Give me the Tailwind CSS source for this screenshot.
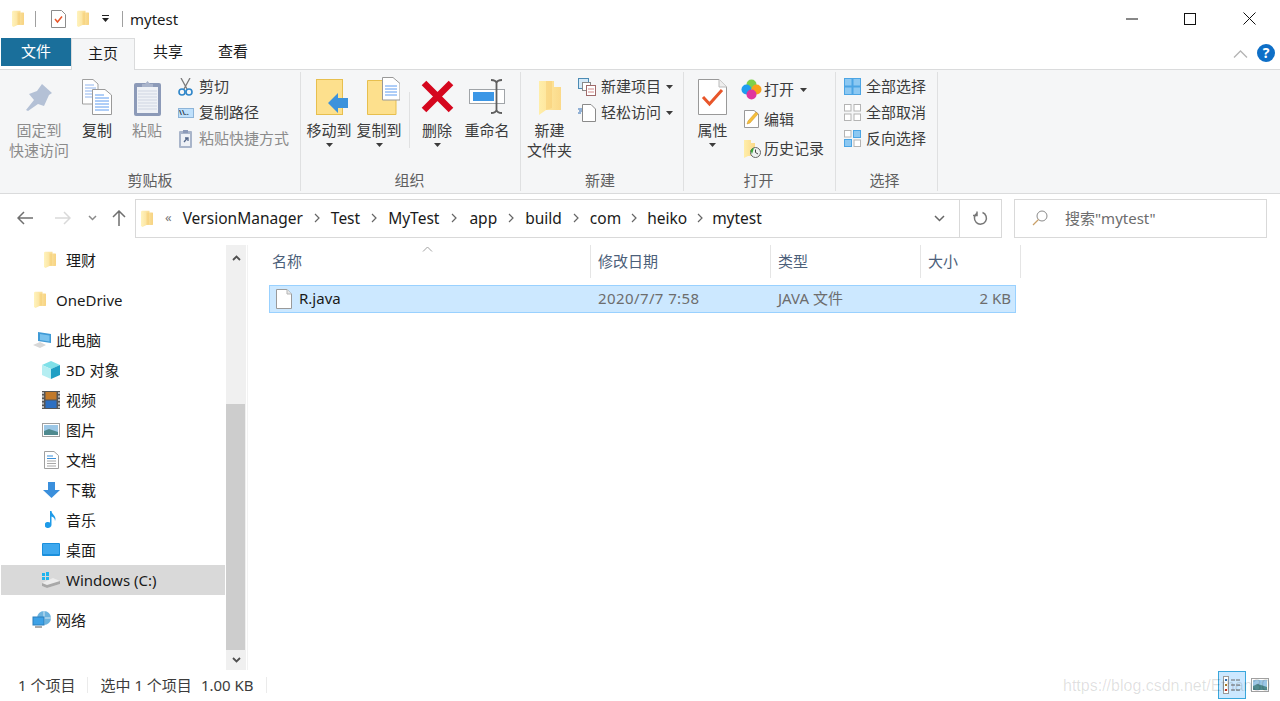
<!DOCTYPE html>
<html lang="zh">
<head>
<meta charset="utf-8">
<title>mytest</title>
<script src="https://cdn.jsdelivr.net/npm/@tailwindcss/browser@4"></script>
</head>
<body class="bg-white overflow-hidden font-['Noto_Sans','Noto_Sans_CJK_SC',sans-serif] text-[15px] leading-none text-[#1a1a1a]">

<svg width="0" height="0" class="absolute">
  <defs>
    <linearGradient id="fg" x1="0" y1="0" x2="1" y2="0"><stop offset="0" stop-color="#fff3bd"/><stop offset="1" stop-color="#f7d382"/></linearGradient>
    <linearGradient id="fg2" x1="0" y1="0" x2="1" y2="0"><stop offset="0" stop-color="#ffeeaa"/><stop offset="1" stop-color="#fbd989"/></linearGradient>
    <symbol id="folder" viewBox="0 0 12 17"><path d="M0 1.500 1 .8H8.500V2.500H11.500L12 3V14.500L11.500 15H5.500L1.500 17 0 16Z" fill="url(#fg)"/><path d="M5.500 2.500V15L8 14.500V2.500Z" fill="#f5c96b" opacity=".45"/></symbol>
    <symbol id="doc" viewBox="0 0 16 20"><path d="M.5.5H11L15.500 5V19.500H.5Z" fill="#fff" stroke="#9a9a9a"/><path d="M11 .5V5H15.500" fill="#e8e8e8" stroke="#b5b5b5"/></symbol>
    <symbol id="docs" viewBox="0 0 30 36"><path d="M.5.5H11L16 5V25H.5Z" fill="#fff" stroke="#a0a0a0"/><path d="M3 6H12M3 9H14M3 12H14M3 15H14M3 18H14" stroke="#8fb4ee"/><path d="M10.500 10.500H23L29.500 16V35.500H10.500Z" fill="#fff" stroke="#9a9a9a"/><path d="M13 16H22M13 19H27M13 22H27M13 25H27M13 28H27M13 31H27" stroke="#5f9cf0"/></symbol>
    <symbol id="caret" viewBox="0 0 7 4"><path d="M0 0H7L3.500 4Z" fill="#3c3c3c"/></symbol>
    <symbol id="crumb" viewBox="0 0 6 10"><path d="M1 1 5 5 1 9" fill="none" stroke="#666" stroke-width="1.200"/></symbol>
  </defs>
</svg>

<div class="h-[701px] w-[1280px] flex flex-col">

  <!-- title bar -->
  <div class="h-[38px] flex items-center relative">
    <svg class="ml-[12px] w-[12px] h-[17px]"><use href="#folder"/></svg>
    <div class="ml-[11px] w-px h-[16px] bg-[#a0a0a0]"></div>
    <svg class="ml-[15px] w-[15px] h-[18px]" viewBox="0 0 15 18"><path d="M.5.5H10.500L14.500 4.500V17.500H.5Z" fill="#fff" stroke="#8c8c8c"/><path d="M4 9 6.500 12 11 6.500" fill="none" stroke="#e8562a" stroke-width="1.500"/></svg>
    <svg class="ml-[11px] w-[12px] h-[17px]"><use href="#folder"/></svg>
    <svg class="ml-[13px] w-[7px] h-[8px]" viewBox="0 0 7 8"><path d="M0 0H7V1H0ZM0 3H7L3.500 7Z" fill="#222"/></svg>
    <div class="ml-[13px] w-px h-[16px] bg-[#a0a0a0]"></div>
    <span class="ml-[7px] mt-[2px] text-[15px] text-[#1a1a1a]">mytest</span>
    <div class="ml-auto flex items-center">
      <svg class="w-[12px] h-[12px] mr-[46px]" viewBox="0 0 12 12"><path d="M0 6H12" stroke="#111"/></svg>
      <svg class="w-[12px] h-[12px] mr-[47px]" viewBox="0 0 12 12"><rect x=".5" y=".5" width="11" height="11" fill="none" stroke="#111"/></svg>
      <svg class="w-[13px] h-[13px] mr-[24px]" viewBox="0 0 13 13"><path d="M.5.5 12.500 12.500M12.500.5.500 12.500" stroke="#111"/></svg>
    </div>
  </div>

  <!-- tabs -->
  <div class="h-[31px] flex items-start relative z-10">
    <div class="ml-px w-[70px] h-[28px] bg-[#1a6f9b] text-white flex items-center justify-center">文件</div>
    <div class="w-[64px] h-[32px] bg-[#f5f6f7] border border-b-0 border-[#dadbdc] flex items-center justify-center pb-[2px]">主页</div>
    <div class="w-[66px] h-[30px] flex items-center justify-center pb-[2px]">共享</div>
    <div class="w-[64px] h-[30px] flex items-center justify-center pb-[2px]">查看</div>
    <svg class="ml-auto mt-[12px] w-[15px] h-[8px]" viewBox="0 0 15 8"><path d="M1 7.500 7.500 1 14 7.500" fill="none" stroke="#b4b4b4" stroke-width="1.300"/></svg>
    <div class="ml-[9px] mr-[5px] mt-[6px] w-[18px] h-[18px] rounded-full bg-[#0e6fc7] text-white text-[14px] font-bold flex items-center justify-center">?</div>
  </div>

  <!-- ribbon -->
  <div class="h-[125px] bg-[#f5f6f7] border-y border-[#dadbdc] flex text-[#3c3c3c]">

    <!-- 剪贴板 -->
    <div class="w-[301px] flex flex-col border-r border-[#dfe0e1] my-[2px]">
      <div class="flex flex-1">
        <div class="w-[78px] flex flex-col items-center text-[#8b8b8b]">
          <svg class="mt-[12px] ml-[2px] w-[28px] h-[28px]" viewBox="0 0 28 28"><path d="M16 0 26 9 23 11 18 22 12 20 2 27 0 26 8 16 3 10 11 7Z" fill="#b4c1d6"/></svg>
          <span class="mt-[11px]">固定到</span><span class="mt-[5px]">快速访问</span>
        </div>
        <div class="w-[38px] flex flex-col items-center">
          <svg class="mt-[7px] w-[30px] h-[36px]"><use href="#docs"/></svg>
          <span class="mt-[8px] text-[#333]">复制</span>
        </div>
        <div class="w-[62px] flex flex-col items-center text-[#8b8b8b]">
          <svg class="mt-[8px] w-[27px] h-[36px]" viewBox="0 0 27 36"><rect x="0" y="3" width="27" height="33" rx="2" fill="#8c9ab8"/><rect x="3" y="7" width="21" height="26" fill="#eef1f6"/><path d="M4 11H23M4 14H23M4 17H23M4 20H23M4 23H23M4 26H23M4 29H23" stroke="#cfd5e2"/><path d="M8 7V4H11L13.500 1 16 4H19V7Z" fill="#a9b4cb"/></svg>
          <span class="mt-[7px]">粘贴</span>
        </div>
        <div class="flex flex-col pt-[2px]">
          <div class="h-[26px] flex items-center gap-[6px]"><svg class="w-[15px] h-[18px]" viewBox="0 0 15 18"><path d="M3 0 9 11M12 0 6 11" stroke="#7a7a7a" stroke-width="1.300"/><circle cx="4" cy="14" r="3" fill="none" stroke="#2f86c9" stroke-width="1.600"/><circle cx="11" cy="14" r="3" fill="none" stroke="#2f86c9" stroke-width="1.600"/></svg><span>剪切</span></div>
          <div class="h-[26px] flex items-center gap-[5px]"><div class="w-[16px] h-[10px] bg-[#bfe0fb] border border-[#8db4d8] text-[7px] font-bold leading-[8px] overflow-hidden text-[#234]">\\..</div><span>复制路径</span></div>
          <div class="h-[26px] flex items-center gap-[5px] text-[#8b8b8b]"><svg class="w-[16px] h-[19px]" viewBox="0 0 16 19"><rect x="1" y="2" width="13" height="17" rx="1" fill="#a9b5ca"/><rect x="3" y="5" width="9" height="12" fill="#eef1f6"/><path d="M5 1H10V4H5Z" fill="#8c9ab8"/><path d="M6 13 9 9.500M7 9H10V12" fill="none" stroke="#55688a" stroke-width="1.300"/></svg><span>粘贴快捷方式</span></div>
        </div>
      </div>
      <div class="h-[24px] pt-[6px] text-center text-[#5f5f5f]">剪贴板</div>
    </div>

    <!-- 组织 -->
    <div class="w-[220px] flex flex-col border-r border-[#dfe0e1] my-[2px]">
      <div class="flex flex-1 pl-[5px]">
        <div class="w-[46px] flex flex-col items-center">
          <svg class="mt-[7px] ml-[7px] w-[33px] h-[36px] shrink-0" viewBox="0 0 33 36"><rect x=".5" y=".5" width="26" height="35" fill="#fde08d" stroke="#e7bf4e"/><path d="M12 24 22 14V19H32V29H22V34Z" fill="#3c92dc"/></svg>
          <span class="mt-[8px] whitespace-nowrap">移动到</span>
          <svg class="mt-[5px] w-[7px] h-[4px]"><use href="#caret"/></svg>
        </div>
        <div class="w-[54px] flex flex-col items-center">
          <svg class="mt-[5px] ml-[8px] w-[33px] h-[38px] shrink-0" viewBox="0 0 33 38"><path d="M.5 3.500H20L29 11V37.500H.5Z" fill="#fde08d" stroke="#e7bf4e"/><path d="M15.500.5H26L33 6.500V23H15.500Z" fill="#fff" stroke="#999"/><path d="M18 9H30M18 12H30M18 15H30M18 18H30" stroke="#5f9cf0"/></svg>
          <span class="mt-[8px] whitespace-nowrap">复制到</span>
          <svg class="mt-[5px] w-[7px] h-[4px]"><use href="#caret"/></svg>
        </div>
        <div class="ml-[3px] w-px h-[56px] mt-[20px] bg-[#e0e1e2]"></div>
        <div class="w-[54px] flex flex-col items-center">
          <svg class="mt-[8px] w-[33px] h-[33px]" viewBox="0 0 33 33"><path d="M3 3 30 30M30 3 3 30" stroke="#d5071e" stroke-width="6.500"/></svg>
          <span class="mt-[10px]">删除</span>
          <svg class="mt-[5px] w-[7px] h-[4px]"><use href="#caret"/></svg>
        </div>
        <div class="w-[46px] flex flex-col items-center">
          <svg class="mt-[7px] w-[37px] h-[35px] shrink-0" viewBox="0 0 37 35"><rect x=".5" y="10.500" width="35" height="14" fill="#fff" stroke="#a0a4a8"/><rect x="4" y="13" width="21" height="9" fill="#3c97e6"/><path d="M22 1C26 1 27 2 27.500 4V31C27 33 26 34 22 34M33 1C29 1 28 2 27.500 4M33 34C29 34 28 33 27.500 31" fill="none" stroke="#5f5f5f" stroke-width="1.800"/></svg>
          <span class="mt-[9px] whitespace-nowrap">重命名</span>
        </div>
      </div>
      <div class="h-[24px] pt-[6px] pr-[2px] text-center text-[#5f5f5f]">组织</div>
    </div>

    <!-- 新建 -->
    <div class="w-[163px] flex flex-col border-r border-[#dfe0e1] my-[2px]">
      <div class="flex flex-1">
        <div class="w-[57px] flex flex-col items-center">
          <svg class="mt-[8px] w-[24px] h-[36px]" viewBox="0 0 24 36"><path d="M1 1H16V7H23V30H8L1 35Z" fill="url(#fg2)"/><path d="M8 1V30L14 28V1Z" fill="#f4c566" opacity=".4"/></svg>
          <span class="mt-[7px]">新建</span><span class="mt-[5px] whitespace-nowrap">文件夹</span>
        </div>
        <div class="flex flex-col pt-[2px]">
          <div class="h-[26px] flex items-center gap-[5px]"><svg class="w-[18px] h-[18px]" viewBox="0 0 18 18"><rect x=".5" y=".5" width="10" height="10" fill="#d5e9f7" stroke="#4b8bb4"/><rect x="4.500" y="4.500" width="8" height="8" fill="#fff" stroke="#8a8a8a"/><rect x="8.500" y="7.500" width="9" height="10" fill="#fff" stroke="#a06a6a"/><path d="M10 11H16M10 14H16" stroke="#d28a8a"/></svg><span class="whitespace-nowrap">新建项目</span><svg class="w-[7px] h-[4px]"><use href="#caret"/></svg></div>
          <div class="h-[26px] flex items-center gap-[5px]"><svg class="w-[18px] h-[18px]" viewBox="0 0 18 18"><path d="M4.500.5H13L17.500 5V17.500H4.500Z" fill="#fff" stroke="#8a8a8a"/><path d="M0 5H4M1 7H4M0 9H3" stroke="#2e6db4"/></svg><span class="whitespace-nowrap">轻松访问</span><svg class="w-[7px] h-[4px]"><use href="#caret"/></svg></div>
        </div>
      </div>
      <div class="h-[24px] pt-[6px] pr-[4px] text-center text-[#5f5f5f]">新建</div>
    </div>

    <!-- 打开 -->
    <div class="w-[152px] flex flex-col border-r border-[#dfe0e1] my-[2px]">
      <div class="flex flex-1">
        <div class="w-[57px] flex flex-col items-center">
          <svg class="mt-[7px] w-[29px] h-[36px]" viewBox="0 0 29 36"><path d="M.5.500H21L28.500 8V35.500H.5Z" fill="#fff" stroke="#999"/><path d="M21 .5V8H28.500" fill="#eee" stroke="#bbb"/><path d="M5 18 11.500 25 24 11" fill="none" stroke="#e8562a" stroke-width="3"/></svg>
          <span class="mt-[8px]">属性</span>
          <svg class="mt-[5px] w-[7px] h-[4px]"><use href="#caret"/></svg>
        </div>
        <div class="flex flex-col pt-[3px]">
          <div class="h-[30px] flex items-center gap-[2px]"><svg class="w-[21px] h-[21px]" viewBox="0 0 21 21"><circle cx="10.500" cy="5.500" r="5" fill="#7ed04b"/><circle cx="5.500" cy="10.500" r="5" fill="#1e9df0"/><circle cx="15.500" cy="10.500" r="5" fill="#f9a11b"/><circle cx="10.500" cy="15.500" r="5" fill="#e0359e"/></svg><span>打开</span><svg class="ml-[4px] w-[7px] h-[4px]"><use href="#caret"/></svg></div>
          <div class="h-[29px] flex items-center gap-[5px]"><svg class="ml-[3px] w-[15px] h-[18px]" viewBox="0 0 15 18"><path d="M.5.5H10L14.500 4V17.500H.5Z" fill="#fff" stroke="#999"/><path d="M3 14 4 11 12 2 14 4 6 13Z" fill="#f6bf3a" stroke="#c9912a" stroke-width=".5"/></svg><span>编辑</span></div>
          <div class="h-[30px] flex items-center gap-[3px]"><svg class="ml-[3px] w-[17px] h-[18px]" viewBox="0 0 17 18"><path d="M0 0H7V3H11V16H4L0 18Z" fill="url(#fg2)"/><circle cx="11.500" cy="12.500" r="5" fill="#eef1f1" stroke="#666"/><path d="M6.500 10.500A5 5 0 0 1 10 8L8 14Z" fill="#3aa53a"/><path d="M11.500 9.500V12.500L14 14" fill="none" stroke="#444"/></svg><span class="whitespace-nowrap">历史记录</span></div>
        </div>
      </div>
      <div class="h-[24px] pt-[6px] pr-[2px] text-center text-[#5f5f5f]">打开</div>
    </div>

    <!-- 选择 -->
    <div class="w-[102px] flex flex-col border-r border-[#dfe0e1] my-[2px]">
      <div class="flex-1 flex flex-col pl-[8px] pt-[2px]">
        <div class="h-[26px] flex items-center gap-[5px]"><svg class="w-[17px] h-[17px]" viewBox="0 0 17 17"><rect width="17" height="17" fill="#4ca5e4"/><rect x="1" y="1" width="6.500" height="6.500" fill="#8cc8f2"/><rect x="9.500" y="1" width="6.500" height="6.500" fill="#8cc8f2"/><rect x="1" y="9.500" width="6.500" height="6.500" fill="#8cc8f2"/><rect x="9.500" y="9.500" width="6.500" height="6.500" fill="#8cc8f2"/></svg><span class="whitespace-nowrap">全部选择</span></div>
        <div class="h-[26px] flex items-center gap-[5px]"><svg class="w-[17px] h-[17px]" viewBox="0 0 17 17" fill="#fff" stroke="#b4b4b4"><rect x=".5" y=".5" width="6.500" height="6.500"/><rect x="10" y=".5" width="6.500" height="6.500"/><rect x=".5" y="10" width="6.500" height="6.500"/><rect x="10" y="10" width="6.500" height="6.500"/></svg><span class="whitespace-nowrap">全部取消</span></div>
        <div class="h-[26px] flex items-center gap-[5px]"><svg class="w-[17px] h-[17px]" viewBox="0 0 17 17"><g fill="#fff" stroke="#b4b4b4"><rect x=".5" y=".5" width="6.500" height="6.500"/><rect x="10" y="10" width="6.500" height="6.500"/></g><g fill="#8cc8f2" stroke="#4ca5e4"><rect x="9.500" y=".5" width="7" height="7"/><rect x=".5" y="9.500" width="7" height="7"/></g></svg><span class="whitespace-nowrap">反向选择</span></div>
      </div>
      <div class="h-[24px] pt-[6px] pr-[4px] text-center text-[#5f5f5f]">选择</div>
    </div>
  </div>

  <!-- address bar -->
  <div class="h-[49px] flex items-center">
    <svg class="ml-[17px] w-[16px] h-[14px]" viewBox="0 0 16 14"><path d="M16 7H1M7 1 1 7 7 13" fill="none" stroke="#6f6f6f" stroke-width="1.500"/></svg>
    <svg class="ml-[22px] w-[16px] h-[14px]" viewBox="0 0 16 14"><path d="M0 7H15M9 1 15 7 9 13" fill="none" stroke="#d9d9d9" stroke-width="1.500"/></svg>
    <svg class="ml-[17px] w-[9px] h-[6px]" viewBox="0 0 9 6"><path d="M1 1 4.500 4.500 8 1" fill="none" stroke="#8a8a8a" stroke-width="1.500"/></svg>
    <svg class="ml-[15px] w-[14px] h-[16px]" viewBox="0 0 14 16"><path d="M7 16V1M1 7 7 1 13 7" fill="none" stroke="#6f6f6f" stroke-width="1.500"/></svg>
    <div class="ml-[9px] w-[867px] h-[39px] border border-[#d9d9d9] flex items-center text-[15.500px] [&>span]:mt-[2px]">
      <svg class="ml-[5px] w-[12px] h-[17px]"><use href="#folder"/></svg>
      <span class="ml-[12px] text-[#777] text-[13px] pb-[4px]">«</span>
      <span class="ml-[11px]">VersionManager</span>
      <svg class="mx-[11px] w-[6px] h-[10px]"><use href="#crumb"/></svg>
      <span>Test</span>
      <svg class="mx-[11px] w-[6px] h-[10px]"><use href="#crumb"/></svg>
      <span>MyTest</span>
      <svg class="mx-[12px] w-[6px] h-[10px]"><use href="#crumb"/></svg>
      <span>app</span>
      <svg class="mx-[11px] w-[6px] h-[10px]"><use href="#crumb"/></svg>
      <span>build</span>
      <svg class="mx-[11px] w-[6px] h-[10px]"><use href="#crumb"/></svg>
      <span>com</span>
      <svg class="mx-[10px] w-[6px] h-[10px]"><use href="#crumb"/></svg>
      <span>heiko</span>
      <svg class="ml-[10px] mr-[9px] w-[6px] h-[10px]"><use href="#crumb"/></svg>
      <span>mytest</span>
      <svg class="ml-auto mr-[14px] w-[11px] h-[7px]" viewBox="0 0 11 7"><path d="M1 1 5.500 5.500 10 1" fill="none" stroke="#666" stroke-width="1.500"/></svg>
      <div class="w-[42px] h-full border-l border-[#d9d9d9] flex items-center justify-center">
        <svg class="w-[15px] h-[15px]" viewBox="0 0 15 15"><path d="M9.500 1.500A6 6 0 1 1 4 2.200M4 .5V4.500H0" fill="none" stroke="#777" stroke-width="1.500"/></svg>
      </div>
    </div>
    <div class="ml-[12px] w-[253px] h-[39px] border border-[#d9d9d9] flex items-center text-[#6d6d6d]">
      <svg class="ml-[17px] w-[16px] h-[16px]" viewBox="0 0 16 16"><circle cx="10" cy="6" r="5" fill="none" stroke="#8a8a8a"/><path d="M6.500 9.500 1 15" stroke="#c9a06a" stroke-width="1.300"/></svg>
      <span class="ml-[17px] text-[15px]">搜索"mytest"</span>
    </div>
  </div>

  <!-- main -->
  <div class="h-[429px] flex">
    <!-- nav pane -->
    <div class="w-[226px] pt-[2px] pl-px [&_span]:mt-[2px]">
      <div class="h-[30px] flex items-center pl-[43px] gap-[10px]"><svg class="w-[12px] h-[17px]"><use href="#folder"/></svg><span>理财</span></div>
      <div class="mt-[10px] h-[30px] flex items-center pl-[33px] gap-[10px]"><svg class="w-[12px] h-[17px]"><use href="#folder"/></svg><span>OneDrive</span></div>
      <div class="mt-[10px] h-[30px] flex items-center pl-[31px] gap-[4px]"><svg class="w-[20px] h-[18px]" viewBox="0 0 20 18"><path d="M6 1 19 3V12L6 10Z" fill="#3f9ad6"/><path d="M8 3 17.500 4.500V10.500L8 9Z" fill="#79c2ee"/><path d="M1 14 8 11 14 14 8 17Z" fill="#d8d8d8"/></svg><span>此电脑</span></div>
      <div class="h-[30px] flex items-center pl-[41px] gap-[6px]"><svg class="w-[18px] h-[18px]" viewBox="0 0 18 18"><path d="M9 0 18 4 9 8 0 4Z" fill="#7fe0e8"/><path d="M0 4 9 8V18L0 14Z" fill="#b5eef2"/><path d="M18 4 9 8V18L18 14Z" fill="#1f9fc4"/></svg><span class="whitespace-pre">3D 对象</span></div>
      <div class="h-[30px] flex items-center pl-[41px] gap-[6px]"><svg class="w-[18px] h-[18px]" viewBox="0 0 18 18"><rect width="18" height="18" fill="#555"/><path d="M1 1V17M17 1V17" stroke="#ddd" stroke-width="1.500" stroke-dasharray="2 1.500"/><rect x="3.500" y="1" width="11" height="7.500" fill="#c27a2b"/><rect x="3.500" y="9.500" width="11" height="7.500" fill="#2c6fc2"/></svg><span>视频</span></div>
      <div class="h-[30px] flex items-center pl-[41px] gap-[6px]"><svg class="w-[18px] h-[14px]" viewBox="0 0 18 14"><rect x=".5" y=".5" width="17" height="13" fill="#fff" stroke="#a0a0a0"/><rect x="2" y="2" width="14" height="10" fill="#9cc7e6"/><path d="M2 8 7 6 16 9V12H2Z" fill="#4f8a8f"/></svg><span>图片</span></div>
      <div class="h-[30px] flex items-center pl-[43px] gap-[7px]"><svg class="w-[15px] h-[18px]" viewBox="0 0 15 18"><path d="M.5.5H10L14.500 4.500V17.500H.5Z" fill="#fff" stroke="#a0a0a0"/><path d="M3 5H9M3 7.500H12" stroke="#3a8fd8"/><path d="M3 10H12M3 12.500H12M3 15H12" stroke="#a8a8a8"/></svg><span>文档</span></div>
      <div class="h-[30px] flex items-center pl-[42px] gap-[6px]"><svg class="w-[17px] h-[16px]" viewBox="0 0 17 16"><path d="M5 0H12V8H17L8.500 16 0 8H5Z" fill="#3a8fdc"/></svg><span>下载</span></div>
      <div class="h-[30px] flex items-center pl-[44px] gap-[9px]"><svg class="w-[12px] h-[18px]" viewBox="0 0 12 18"><path d="M5 0H6.500C7 4 12 5 10 10 10 7 8 6 6.500 5.500V14A3.500 3 0 1 1 5 11.500Z" fill="#1f9be8"/></svg><span>音乐</span></div>
      <div class="h-[30px] flex items-center pl-[41px] gap-[6px]"><svg class="w-[18px] h-[13px]" viewBox="0 0 18 13"><rect width="18" height="13" rx="1" fill="#1a8fdc"/><rect x="1" y="1" width="16" height="10" fill="#3ea8ee"/></svg><span>桌面</span></div>
      <div class="mr-px h-[30px] flex items-center pl-[40px] gap-[6px] bg-[#d9d9d9]"><svg class="w-[19px] h-[16px]" viewBox="0 0 19 16"><path d="M1 1H4V4H1ZM5 0H8V4H5ZM1 5H4V8H1ZM5 5H8V8H5Z" fill="#1eb4ee"/><path d="M1 11 12 6 19 9V12L6 16 1 14Z" fill="#ececec"/><path d="M1 11 6 13 19 9V12L6 16 1 14Z" fill="#a8a8a8"/></svg><span>Windows (C:)</span></div>
      <div class="mt-[10px] h-[30px] flex items-center pl-[31px] gap-[4px]"><svg class="w-[20px] h-[18px]" viewBox="0 0 20 18"><circle cx="12" cy="7" r="7" fill="#6cb3de"/><path d="M12 0V14M5 7H19" stroke="#d5eaf6"/><rect x="1" y="6" width="11" height="8" fill="#3da1e6" stroke="#2b7fbc"/><path d="M3 16H10" stroke="#aaa" stroke-width="2"/></svg><span>网络</span></div>
    </div>

    <!-- scrollbar -->
    <div class="w-[20px] mt-[2px] mb-px bg-[#f0f0f0] flex flex-col items-center">
      <div class="h-[27px] flex items-center justify-center"><svg class="w-[9px] h-[6px]" viewBox="0 0 9 6"><path d="M1 5 4.500 1.500 8 5" fill="none" stroke="#505050" stroke-width="1.800"/></svg></div>
      <div class="mt-[132px] w-full pr-px h-[246px]"><div class="h-full bg-[#cdcdcd]"></div></div>
      <div class="flex-1 flex items-center justify-center"><svg class="w-[9px] h-[6px]" viewBox="0 0 9 6"><path d="M1 1 4.500 4.500 8 1" fill="none" stroke="#505050" stroke-width="1.800"/></svg></div>
    </div>
    <div class="ml-px w-px mt-[2px] mb-px bg-[#f2f2f2]"></div>

    <!-- file list -->
    <div class="flex-1 relative pl-[21px] pt-[2px] text-[#6d6d6d]">
      <svg class="absolute left-[174px] top-[3px] w-[11px] h-[6px]" viewBox="0 0 11 6"><path d="M1 5.500 5.500 1 10 5.500" fill="none" stroke="#a0a0a0"/></svg>
      <div class="h-[33px] flex items-center text-[#4c607a]">
        <div class="w-[322px] h-full flex items-center pl-[3px] border-r border-[#e5e5e5]">名称</div>
        <div class="w-[180px] h-full flex items-center pl-[7px] border-r border-[#e5e5e5]">修改日期</div>
        <div class="w-[150px] h-full flex items-center pl-[7px] border-r border-[#e5e5e5]">类型</div>
        <div class="w-[100px] h-full flex items-center pl-[7px] border-r border-[#e5e5e5]">大小</div>
      </div>
      <div class="mt-[7px] w-[747px] h-[28px] bg-[#cce8ff] border border-[#99d1ff] flex items-center">
        <svg class="ml-[6px] w-[16px] h-[20px]"><use href="#doc"/></svg>
        <span class="ml-[7px] w-[299px] text-[#1a1a1a]">R.java</span>
        <span class="w-[180px] tracking-[0.4px]">2020/7/7 7:58</span>
        <span class="w-[100px]">JAVA 文件</span>
        <span class="flex-1 text-right pr-[4px]">2 KB</span>
      </div>
    </div>
  </div>

  <!-- status bar -->
  <div class="flex-1 flex items-center relative pb-[2px] text-[#3c3c3c]">
    <span class="ml-[18px]">1 个项目</span>
    <div class="ml-[12px] w-px h-[16px] bg-[#ebebeb]"></div>
    <span class="ml-[12px]">选中 1 个项目</span>
    <span class="ml-[9px]">1.00 KB</span>
    <div class="ml-[12px] w-px h-[16px] bg-[#ebebeb]"></div>
    <div class="ml-auto w-[28px] h-[28px] bg-[#cce8ff] border border-[#3aa7dc] flex items-center justify-center">
      <svg class="w-[18px] h-[18px]" viewBox="0 0 18 18"><rect x=".5" y=".5" width="5" height="17" fill="#fff" stroke="#999"/><rect x="2" y="3" width="2" height="2" fill="#2e6db4"/><rect x="2" y="8" width="2" height="2" fill="#a87a2a"/><rect x="2" y="13" width="2" height="2" fill="#c8301e"/><path d="M8 4H17M8 9H17M8 14H17" stroke="#666" stroke-dasharray="4 1"/></svg>
    </div>
    <svg class="ml-[5px] mr-[11px] w-[18px] h-[14px]" viewBox="0 0 18 14"><rect x=".5" y=".5" width="17" height="13" fill="#fff" stroke="#a0a0a0"/><rect x="2" y="2" width="14" height="10" fill="#9cc7e6"/><path d="M2 8 7 6 16 9V12H2Z" fill="#4f8a8f"/></svg>
    <span class="absolute left-[1063px] top-[3px] text-[16px] leading-[24px] font-['Liberation_Sans',sans-serif] text-[#000000]/[0.13] whitespace-nowrap">https://blog.csdn.net/Ethan30</span>
  </div>
</div>
</body>
</html>
